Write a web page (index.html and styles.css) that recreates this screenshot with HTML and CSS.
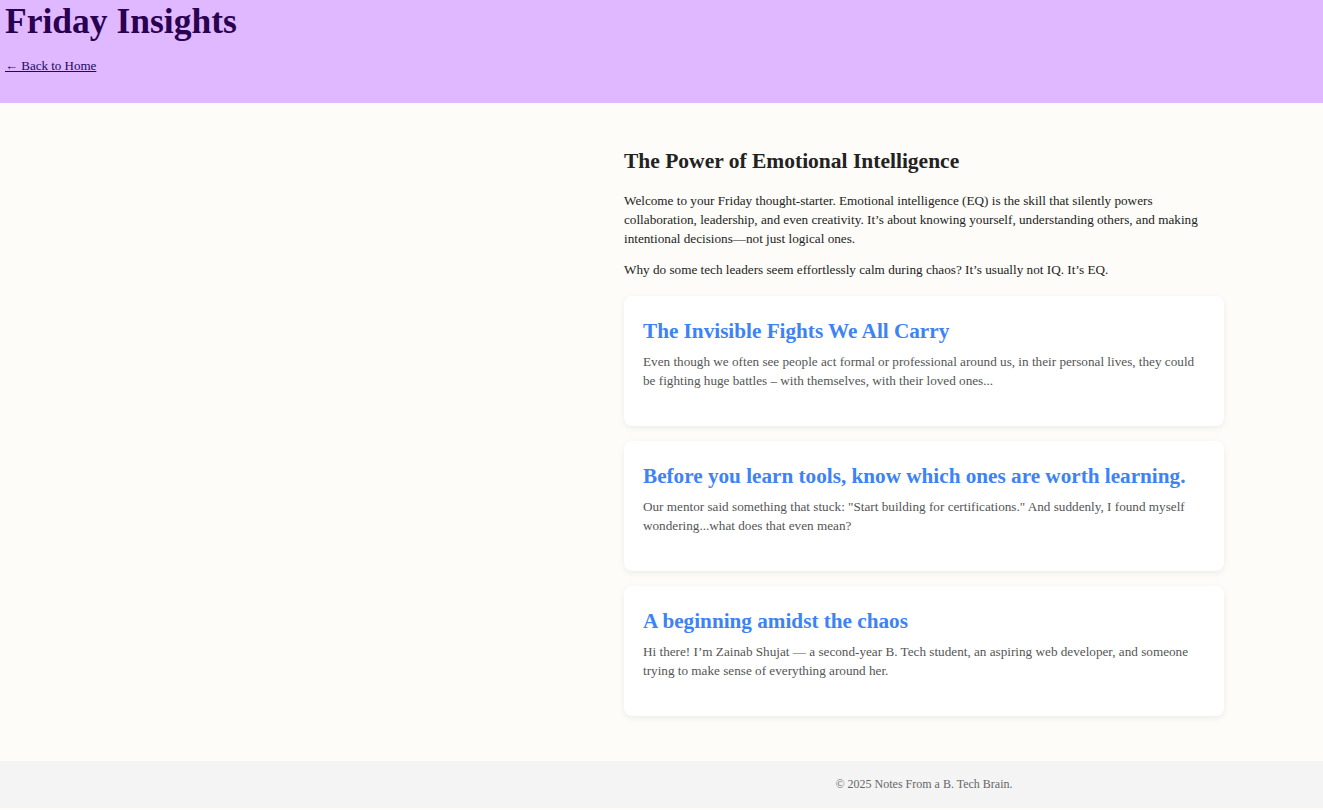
FILE: index.html
```html
<!DOCTYPE html>
<html lang="en">
<head>
<meta charset="utf-8">
<title>Friday Insights</title>
<link rel="stylesheet" href="styles.css">
</head>
<body>
<header class="site-header">
  <h1 class="site-title">Friday Insights</h1>
  <a class="back-link" href="#">← Back to Home</a>
</header>
<main class="layout">
  <div class="spacer"></div>
  <section class="content">
    <h2 class="intro-title">The Power of Emotional Intelligence</h2>
    <p class="intro-text">Welcome to your Friday thought-starter. Emotional intelligence (EQ) is the skill that silently powers collaboration, leadership, and even creativity. It’s about knowing yourself, understanding others, and making intentional decisions—not just logical ones.</p>
    <p class="intro-text">Why do some tech leaders seem effortlessly calm during chaos? It’s usually not IQ. It’s EQ.</p>
    <div class="cards">
      <article class="card">
        <h3 class="card-title">The Invisible Fights We All Carry</h3>
        <p class="card-text">Even though we often see people act formal or professional around us, in their personal lives, they could be fighting huge battles – with themselves, with their loved ones...</p>
      </article>
      <article class="card">
        <h3 class="card-title">Before you learn tools, know which ones are worth learning.</h3>
        <p class="card-text">Our mentor said something that stuck: "Start building for certifications." And suddenly, I found myself wondering...what does that even mean?</p>
      </article>
      <article class="card">
        <h3 class="card-title">A beginning amidst the chaos</h3>
        <p class="card-text">Hi there! I’m Zainab Shujat — a second-year B. Tech student, an aspiring web developer, and someone trying to make sense of everything around her.</p>
      </article>
    </div>
  </section>
</main>
<footer class="site-footer">
  <div class="spacer"></div>
  <p class="footer-text">© 2025 Notes From a B. Tech Brain.</p>
</footer>
</body>
</html>
```

FILE: styles.css
```css
* { box-sizing: border-box; }
html, body {
  margin: 0;
  padding: 0;
}
body {
  background: #fdfcf8;
  font-family: "Liberation Serif", "DejaVu Serif", serif;
  color: #222;
}
.site-header {
  background: #e0b8ff;
  height: 103px;
  padding: 0 5px;
}
.site-title {
  margin: 0;
  padding-top: 1px;
  font-size: 35.5px;
  line-height: 40px;
  font-weight: bold;
  color: #2a0050;
}
.back-link {
  display: inline-block;
  margin-top: 17px;
  font-size: 13px;
  color: #1a0a60;
  text-decoration: underline;
}
.layout {
  display: grid;
  grid-template-columns: 1fr 600px;
  padding: 46px 99px 45px 0;
}
.content { min-width: 0; }
.intro-title {
  margin: 0 0 18px;
  font-size: 21.5px;
  line-height: 24px;
  font-weight: bold;
  color: #222;
}
.intro-text {
  margin: 0 0 12px;
  font-size: 13.2px;
  line-height: 19px;
  color: #222;
}
.cards {
  display: flex;
  flex-direction: column;
  gap: 15px;
  margin-top: 17px;
}
.card {
  background: #fff;
  border-radius: 8px;
  box-shadow: 0 2px 6px rgba(0,0,0,0.07);
  padding: 22px 19px 0;
  height: 130px;
}
.card-title {
  margin: 0 0 8px;
  font-size: 21.2px;
  line-height: 26px;
  font-weight: bold;
  color: #3d82f6;
}
.card-text {
  margin: 0;
  font-size: 13.2px;
  line-height: 19px;
  color: #555;
}
.site-footer {
  display: grid;
  grid-template-columns: 1fr 600px;
  padding-right: 99px;
  background: #f4f4f4;
  height: 47px;
  align-items: center;
}
.footer-text {
  margin: 0;
  text-align: center;
  font-size: 12px;
  color: #666;
}
```
